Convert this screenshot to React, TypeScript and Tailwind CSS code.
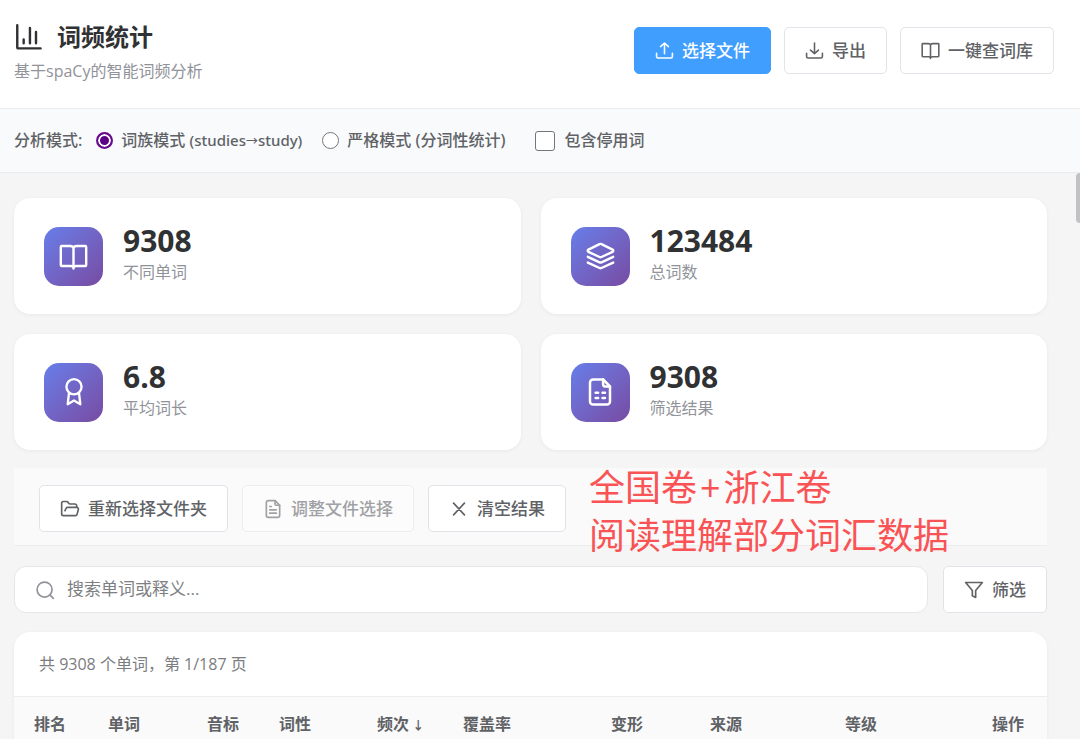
import { useState } from "react";
import type { ReactNode } from "react";

type IconProps = { className?: string; children: ReactNode; weight?: number };

function Icon({ className = "size-5", weight = 2, children }: IconProps) {
  return (
    <svg
      className={`shrink-0 ${className}`}
      viewBox="0 0 24 24"
      fill="none"
      stroke="currentColor"
      strokeWidth={weight}
      strokeLinecap="round"
      strokeLinejoin="round"
      aria-hidden="true"
    >
      {children}
    </svg>
  );
}

const bookPath = (
  <path d="M12 22V5.500c0-1.200-1-2.200-2.700-2.200H2.300a.8.8 0 0 0-.8.8v15a.8.8 0 0 0 .8.8H9.800c1.300 0 2.200.6 2.200 1.600 0-1 .9-1.600 2.200-1.600h7.500a.8.8 0 0 0 .8-.8V4.100a.8.8 0 0 0-.8-.8H14.700c-1.700 0-2.700 1-2.700 2.200" />
);

const filePath = (
  <>
    <path d="M14.500 2H6.500A2.500 2.500 0 0 0 4 4.500v15A2.500 2.500 0 0 0 6.500 22h11a2.500 2.500 0 0 0 2.500-2.500V7.500z" />
    <path d="M14.500 2v4a1.500 1.500 0 0 0 1.500 1.500h4" />
  </>
);

const trayPath = <path d="M2 15.500v4a2 2 0 0 0 2 2h16a2 2 0 0 0 2-2v-4" />;

type ButtonProps = { icon: ReactNode; label: string; primary?: boolean; disabled?: boolean };

function Button({ icon, label, primary, disabled }: ButtonProps) {
  const look = primary
    ? "border-[#409eff] bg-[#409eff] text-white"
    : disabled
      ? "border-[#ededee] bg-[#fcfcfc] text-[#a0a1a4]"
      : "border-[#e1e3e8] bg-white text-[#606266]";
  return (
    <button
      type="button"
      disabled={disabled}
      className={`flex h-[47px] shrink-0 items-center gap-2 rounded-[5px] border px-5 text-[17px] leading-6 font-medium ${look}`}
    >
      {icon}
      {label}
    </button>
  );
}

function StatCard({ icon, value, label }: { icon: ReactNode; value: string; label: string }) {
  return (
    <div className="flex h-[116px] items-center gap-5 rounded-2xl bg-white px-[30px] shadow-[0_1px_4px_rgba(0,0,0,0.05)]">
      <div className="flex size-[59px] items-center justify-center rounded-[15px] bg-linear-135 from-[#667eea] to-[#764ba2] text-white">
        {icon}
      </div>
      <div className="pb-1">
        <div className="mb-0.5 text-[30px] leading-[34px] font-bold text-[#303133]">{value}</div>
        <div className="text-base leading-6 text-[#909399]">{label}</div>
      </div>
    </div>
  );
}

const stats = [
  { value: "9308", label: "不同单词", icon: <Icon className="size-[29px]">{bookPath}</Icon> },
  {
    value: "123484",
    label: "总词数",
    icon: (
      <Icon className="size-[29px]">
        <path d="M12.800 1.700a2 2 0 0 0-1.600 0L2 6.300a1 1 0 0 0 0 1.800l9.200 4.300a2 2 0 0 0 1.600 0L22 8.100a1 1 0 0 0 0-1.800z" />
        <path d="m1.500 12.300 9.700 4.500a2 2 0 0 0 1.600 0l9.700-4.500" />
        <path d="m1.500 17 9.700 4.500a2 2 0 0 0 1.600 0l9.700-4.500" />
      </Icon>
    ),
  },
  {
    value: "6.8",
    label: "平均词长",
    icon: (
      <Icon className="size-7">
        <circle cx="12" cy="7.500" r="6.500" />
        <path d="M7.700 13 6.600 22.500l5.400-3.200 5.400 3.200L16.300 13" />
      </Icon>
    ),
  },
  {
    value: "9308",
    label: "筛选结果",
    icon: (
      <Icon className="size-[30px]">
        {filePath}
        <path d="M8.500 12.500h2M14 12.500h2M8.500 16.800h2M14 16.800h2" />
      </Icon>
    ),
  },
];

const columns = [
  { name: "排名", width: "w-[74px]" },
  { name: "单词", width: "w-[99px]" },
  { name: "音标", width: "w-[72px]" },
  { name: "词性", width: "w-[98px]" },
  { name: "频次", width: "w-[86px]", sorted: true },
  { name: "覆盖率", width: "w-[148px]" },
  { name: "变形", width: "w-[99px]" },
  { name: "来源", width: "w-[135px]" },
  { name: "等级", width: "w-[147px]" },
  { name: "操作", width: "w-[75px]" },
];

const radioClass =
  "size-[17px] appearance-none rounded-full border border-[#767676] bg-white checked:border-2 checked:border-[#6a0a8f] checked:bg-[#5c0086] checked:shadow-[inset_0_0_0_2px_#fff]";

function Header() {
  return (
    <header className="flex items-start justify-between border-b border-[#e9ecef] bg-white pt-[19px] pr-[26px] pb-[25px] pl-[14px]">
      <div>
        <h1 className="flex items-center gap-[14px] text-2xl leading-9 font-bold text-[#303133]">
          <Icon className="size-[29px]">
            <path d="M2.700 1.800v18.400a.8.8 0 0 0 .8.8H22" />
            <path d="M8 16.800v-3.200M13.200 16.800V4.200M18.200 16.800V7.500" />
          </Icon>
          词频统计
        </h1>
        <p className="mt-1 text-base leading-6 text-[#909399]">基于spaCy的智能词频分析</p>
      </div>
      <div className="mt-2 flex gap-[13px]">
        <Button
          primary
          label="选择文件"
          icon={
            <Icon className="size-[19px]">
              {trayPath}
              <path d="M12 16V2.500M7 7l5-4.500L17 7" />
            </Icon>
          }
        />
        <Button
          label="导出"
          icon={
            <Icon className="size-[19px]">
              {trayPath}
              <path d="M12 2.500V16M7 11.500l5 4.500 5-4.500" />
            </Icon>
          }
        />
        <Button label="一键查词库" icon={<Icon className="size-[19px]">{bookPath}</Icon>} />
      </div>
    </header>
  );
}

function ModeBar() {
  const [mode, setMode] = useState("family");
  return (
    <div className="flex items-center border-b border-[#e9ecef] bg-[#f8fafc] px-[14px] py-5 font-['Noto_Sans','Noto_Sans_CJK_SC',sans-serif] text-base leading-[23px] font-medium text-[#606266]">
      <span>分析模式:</span>
      <label className="ml-[14px] flex items-center gap-2">
        <input type="radio" name="mode" className={radioClass} checked={mode === "family"} onChange={() => setMode("family")} />
        <span>
          词族模式{" "}
          <span className="text-[15px]">
            (studies<span className="text-xs">→</span>study)
          </span>
        </span>
      </label>
      <label className="ml-5 flex items-center gap-2">
        <input type="radio" name="mode" className={radioClass} checked={mode === "strict"} onChange={() => setMode("strict")} />
        严格模式 (分词性统计)
      </label>
      <label className="ml-[30px] flex items-center gap-[9px]">
        <input type="checkbox" className="size-5 appearance-none rounded-[3px] border border-[#767676] bg-white checked:bg-[#409eff]" />
        包含停用词
      </label>
    </div>
  );
}

export default function App() {
  const [query, setQuery] = useState("");
  return (
    <div className="flex h-screen flex-col overflow-hidden bg-[#f5f5f5] font-['Open_Sans','Noto_Sans_CJK_SC',sans-serif]">
      <Header />
      <ModeBar />
      <main className="relative min-h-0 flex-1 overflow-hidden pt-[25px] pr-[33px] pl-[14px]">
        <div className="absolute top-0 right-0 h-[50px] w-1 rounded-l-sm bg-[#c1c2c5]" />

        <section className="grid grid-cols-2 gap-5">
          {stats.map((s) => (
            <StatCard key={s.label} {...s} />
          ))}
        </section>

        <section className="relative mt-[18px] flex gap-[14px] border-b border-[#ebedef] bg-[#fafafa] px-[25px] pt-[17px] pb-[13px]">
          <Button
            label="重新选择文件夹"
            icon={
              <Icon>
                <path d="m6 14 1.400-2.900A2 2 0 0 1 9.200 10H20a2 2 0 0 1 2 2.500l-1.500 6a2 2 0 0 1-2 1.500H4a2 2 0 0 1-2-2V5a2 2 0 0 1 2-2h3.900a2 2 0 0 1 1.700.9l.8 1.200a2 2 0 0 0 1.700.9H18a2 2 0 0 1 2 2v2" />
              </Icon>
            }
          />
          <Button
            disabled
            label="调整文件选择"
            icon={
              <Icon>
                {filePath}
                <path d="M8 9h2M8 13h8M8 17h8" />
              </Icon>
            }
          />
          <Button
            label="清空结果"
            icon={
              <Icon>
                <path d="m5.500 5 13 14M18.500 5l-13 14" />
              </Icon>
            }
          />
          {/* caption laid over the toolbar */}
          <p className="absolute -top-1 left-[575px] text-4xl leading-[48px] whitespace-nowrap text-[#f95355]">
            全国卷<span className="px-[3px]">+</span>浙江卷
            <br />
            阅读理解部分词汇数据
          </p>
        </section>

        <section className="mt-5 flex gap-[15px]">
          <label className="flex h-[47px] flex-1 items-center gap-3 rounded-xl border border-[#e6e7ea] bg-white px-5 text-[#909399]">
            <Icon>
              <circle cx="11.500" cy="11.500" r="9" />
              <path d="m18.500 18.500 3.500 3.500" />
            </Icon>
            <input
              type="text"
              aria-label="搜索"
              placeholder="搜索单词或释义..."
              value={query}
              onChange={(e) => setQuery(e.target.value)}
              className="min-w-0 flex-1 bg-transparent pb-0.5 text-[17px] leading-6 text-[#303133] outline-none placeholder:text-[#7d7f83]"
            />
          </label>
          <Button
            label="筛选"
            icon={
              <Icon>
                <path d="M2 3h20l-8 9.500V21l-4-2v-6.500z" />
              </Icon>
            }
          />
        </section>

        <section className="mt-[19px] overflow-hidden rounded-t-2xl bg-white shadow-[0_1px_4px_rgba(0,0,0,0.05)]">
          <div className="border-b border-[#ebeef0] px-[25px] py-5 text-base leading-6 text-[#7b7d81]">共 9308 个单词，第 1/187 页</div>
          <table className="w-full table-fixed text-left">
            <thead className="bg-[#fafafa]">
              <tr>
                {columns.map((c) => (
                  <th key={c.name} scope="col" className={`${c.width} py-[15px] pl-5 text-base leading-6 font-bold whitespace-nowrap text-[#606266]`}>
                    {c.name}
                    {c.sorted ? <span className="text-xs"> ↓</span> : null}
                  </th>
                ))}
              </tr>
            </thead>
          </table>
        </section>
      </main>
    </div>
  );
}
